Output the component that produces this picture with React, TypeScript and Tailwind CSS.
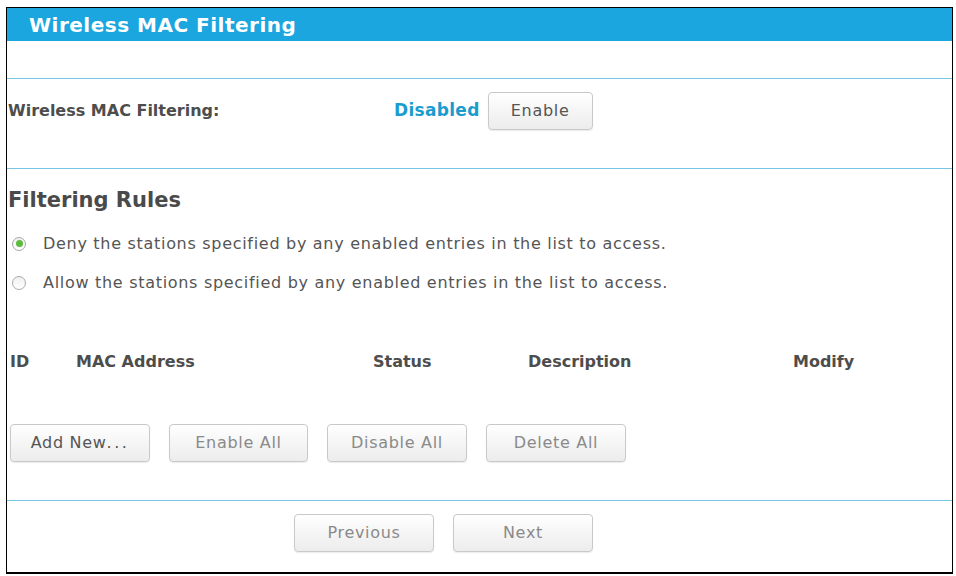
import React from "react";

const font = { fontFamily: '"DejaVu Sans", Verdana, Tahoma, sans-serif' };

function Btn({ children, className = "" }: { children: React.ReactNode; className?: string }) {
  return (
    <button
      className={
        "h-[38px] rounded-[4px] border border-[#c9c9c9] bg-gradient-to-b from-[#ffffff] to-[#ececec] text-[16px] tracking-[0.7px] text-[#6b6b6b] shadow-[0_1px_1px_rgba(0,0,0,0.08)] " +
        className
      }
      style={font}
    >
      {children}
    </button>
  );
}

function Radio({ checked }: { checked?: boolean }) {
  return (
    <span className="flex h-[14px] w-[14px] items-center justify-center rounded-full border border-[#a9a9a9] bg-gradient-to-b from-[#f0f0f0] to-[#ffffff]">
      {checked && <span className="h-[7px] w-[7px] rounded-full bg-[#5dbb3e]" />}
    </span>
  );
}

export default function App() {
  return (
    <div className="h-[576px] w-[956px] bg-white pl-[6px] pt-[7px]" style={font}>
      <div className="flex h-[567px] w-[947px] flex-col border border-b-2 border-black">
        <div className="flex h-[33px] items-center bg-[#1ba6e0] pl-[22px]">
          <span className="text-[20px] font-bold tracking-[0.5px] text-white">Wireless MAC Filtering</span>
        </div>
        <div className="h-[38px] border-b border-[#79c3e4]" />
        <div className="h-[90px] border-b border-[#79c3e4] pt-[14px]">
          <div className="flex h-[36px] items-center">
            <span className="w-[387px] pl-[1px] text-[16px] font-bold text-[#4d4d4d]">Wireless MAC Filtering:</span>
            <span className="text-[17px] font-bold tracking-[0.3px] text-[#1b9ccf]">Disabled</span>
            <Btn className="ml-[8px] h-[36px] w-[105px] text-[#555]">Enable</Btn>
          </div>
        </div>
        <div className="h-[332px] border-b border-[#79c3e4]">
          <div className="pl-[1px] pt-[17px] text-[21px] font-bold leading-[28px] text-[#4a4a4a]">Filtering Rules</div>
          <div className="mt-[10px] flex h-[39px] items-center pl-[5px]">
            <Radio checked />
            <span className="ml-[17px] text-[16px] tracking-[0.7px] text-[#555]">
              Deny the stations specified by any enabled entries in the list to access.
            </span>
          </div>
          <div className="flex h-[39px] items-center pl-[5px]">
            <Radio />
            <span className="ml-[17px] text-[16px] tracking-[0.7px] text-[#555]">
              Allow the stations specified by any enabled entries in the list to access.
            </span>
          </div>
          <div className="mt-[50px] flex h-[20px] items-center text-[16px] font-bold text-[#4d4d4d]">
            <span className="w-[69px] pl-[3px]">ID</span>
            <span className="w-[297px]">MAC Address</span>
            <span className="w-[155px]">Status</span>
            <span className="w-[265px]">Description</span>
            <span>Modify</span>
          </div>
          <div className="mt-[52px] flex gap-[19px] pl-[3px]">
            <Btn className="w-[140px] text-[#555]">
              Add New<span className="tracking-[2.5px]">...</span>
            </Btn>
            <Btn className="w-[139px] text-[#8a8a8a]">Enable All</Btn>
            <Btn className="w-[140px] text-[#8a8a8a]">Disable All</Btn>
            <Btn className="w-[140px] text-[#8a8a8a]">Delete All</Btn>
          </div>
        </div>
        <div className="flex gap-[19px] pl-[287px] pt-[13px]">
          <Btn className="w-[140px] text-[#8a8a8a]">Previous</Btn>
          <Btn className="w-[140px] text-[#8a8a8a]">Next</Btn>
        </div>
      </div>
    </div>
  );
}
